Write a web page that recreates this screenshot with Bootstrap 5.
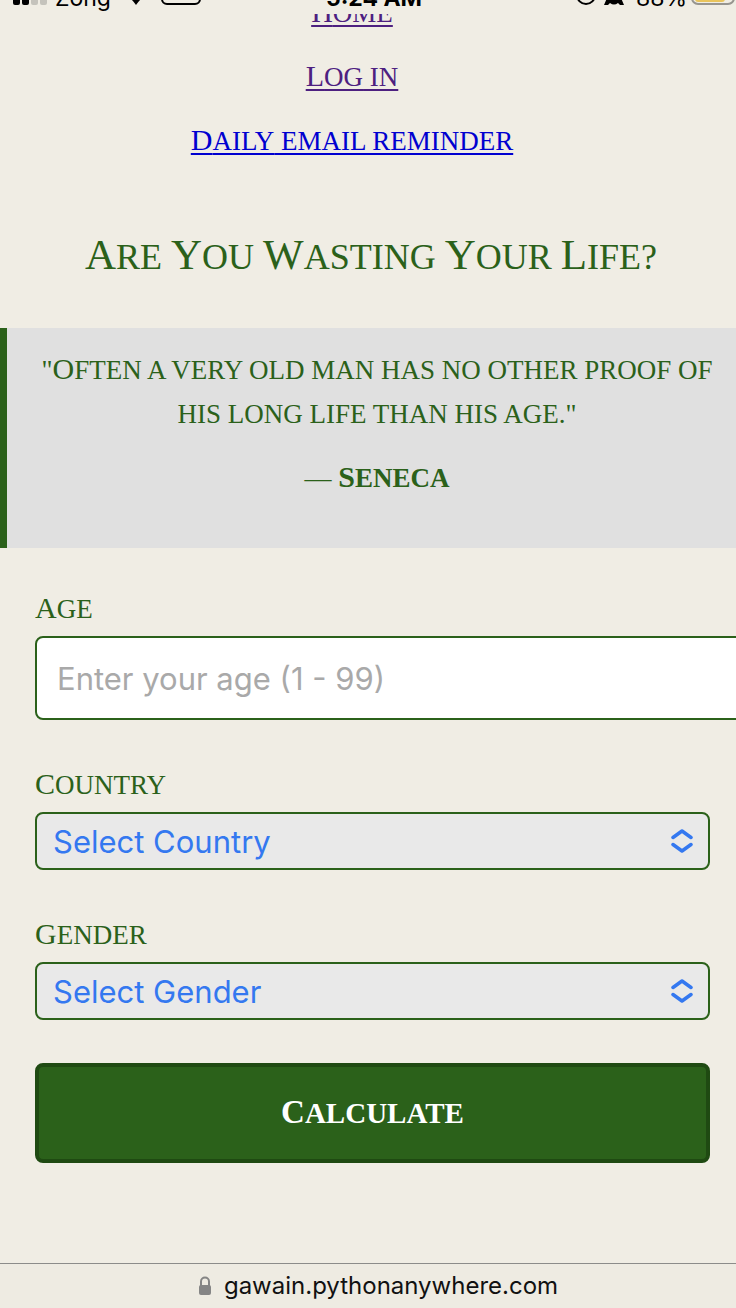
<!DOCTYPE html>
<html lang="en">
<head>
<meta charset="utf-8">
<meta name="viewport" content="width=device-width, initial-scale=1">
<title>Are You Wasting Your Life?</title>
<link rel="stylesheet" href="https://cdn.jsdelivr.net/npm/bootstrap@5.3.0/dist/css/bootstrap.min.css">
<style>
  :root { --leaf: #2b611a; --leaf-dark: #1f4a12; --paper: #f0ede4; }
  body { background: var(--paper); color: var(--leaf); font: 27px/44px "Liberation Serif", serif; }
  .screen { overflow: hidden; }
  /* Inscription capitals: every word in capitals, a lead word starts larger */
  .caps { text-transform: uppercase; }
  .lead-cap { display: inline-block; line-height: 30px; }
  .lead-cap::first-letter { font-size: 30px; line-height: 30px; }
  .status { height: 14px; background: var(--paper); color: #000; font: 23px/24px Inter, sans-serif; z-index: 2; }
  .status > div { height: 14px; padding: 0 0 9px 13px; }
  .status > div:last-child { padding-right: 1px; }
  .status-text { margin-bottom: -5px; }
  .site-nav { margin-top: -23px; padding-right: 32px; gap: 20px; }
  .site-nav a { height: 44px; color: #0000d0; text-underline-offset: 3px; text-decoration-thickness: 2px; }
  .site-nav a.seen { color: #4d2080; }
  .site-nav .lead-cap { text-decoration: underline 2px; }
  h1 { font-size: 36px; line-height: 60px; margin: 64px 0 41px; padding-left: 6px; }
  h1 .lead-cap::first-letter { font-size: 43px; }
  .quote { background: #e0e0e0; border-left: 7px solid var(--leaf); padding: 20px 18px 48px 29px; }
  .quote p { margin-bottom: 20px; }
  .life-form { padding: 39px 26px 99px 35px; }
  .field { margin-bottom: 43px; }
  .field label { margin-bottom: 5px; height: 44px; }
  .field .form-control, .field .form-select { border: 2px solid var(--leaf); border-radius: 8px; font: 31px/40px Inter, sans-serif; }
  .field .form-control { width: calc(100% + 60px); padding: 21px 20px 19px; background: #fff; }
  .field .form-control::placeholder { color: #a9a9a9; opacity: 1; }
  .field .form-select { padding: 8px 56px 6px 16px; color: #3478f0; background-color: #e9e9e9;
    background-image: url("data:image/svg+xml,%3Csvg xmlns='http://www.w3.org/2000/svg' viewBox='0 0 22 26' fill='none' stroke='%233478f0' stroke-width='3.500' stroke-linecap='round' stroke-linejoin='round'%3E%3Cpath d='M2 9.500 11 3l9 6.500M2 16.500 11 23l9-6.500'/%3E%3C/svg%3E");
    background-size: 22px 26px; background-position: right 15px center; }
  .btn-calc { height: 100px; background: var(--leaf); border: 4px solid var(--leaf-dark); border-radius: 8px; color: #fff; font: bold 29px/44px "Liberation Serif", serif; }
  .btn-calc:hover { background: var(--leaf-dark); color: #fff; }
  .btn-calc .lead-cap::first-letter { font-size: 33px; }
  .address { border-top: 1px solid #8c8c8a; background: #eeebe2; padding-left: 20px; gap: 12px; height: 45px; font: 24px/44px Inter, sans-serif; }
  .address a { color: #111; }
</style>
</head>
<body>
<div class="screen d-flex flex-column min-vh-100">
  <header class="status d-flex overflow-hidden position-relative">
    <div class="col d-flex align-items-end">
      <svg width="34" height="20" class="flex-shrink-0 me-2" aria-hidden="true"><rect y="12" width="7" height="8" rx="2"/><rect x="9" y="8" width="7" height="12" rx="2"/><g fill="#c5c3bc"><rect x="18" y="4" width="7" height="16" rx="2"/><rect x="27" width="7" height="20" rx="2"/></g></svg>
      <span class="status-text">Zong</span>
      <svg width="18" height="20" class="flex-shrink-0 ms-3" aria-hidden="true"><path d="M2 0h14v13q-2 0-7 7-5-7-7-7z"/></svg>
      <svg width="40" height="20" class="flex-shrink-0 ms-3" aria-hidden="true"><rect x="1" y="1" width="38" height="18" rx="5" fill="none" stroke="#000" stroke-width="2"/></svg>
    </div>
    <div class="col-auto d-flex align-items-end fw-bold"><span class="status-text">5:24 AM</span></div>
    <div class="col d-flex align-items-end justify-content-end">
      <svg width="20" height="20" class="flex-shrink-0" aria-hidden="true"><circle cx="10" cy="10" r="9" fill="none" stroke="#000" stroke-width="2"/></svg>
      <svg width="20" height="20" class="flex-shrink-0 ms-2 me-2" aria-hidden="true"><path d="M3 0h14v13l3 7h-4l-2-2q-4 3-8 0l-2 2H0l3-7z"/></svg>
      <span class="status-text ms-1">88%</span>
      <svg width="44" height="20" class="flex-shrink-0 ms-1" aria-hidden="true"><rect x="1" y="-1" width="42" height="20" rx="6" fill="none" stroke="#97958f" stroke-width="2"/><rect x="4" y="0" width="30" height="17" rx="3" fill="#e9c45c"/></svg>
    </div>
  </header>

  <nav class="site-nav caps d-flex flex-column align-items-center">
    <a class="seen" href="#home"><span class="lead-cap">Home</span></a>
    <a class="seen" href="#login"><span class="lead-cap">Log</span> in</a>
    <a href="#reminder"><span class="lead-cap">Daily</span> email reminder</a>
  </nav>

  <main class="flex-grow-1">
    <h1 class="caps text-center fw-normal"><span class="lead-cap">Are</span> <span class="lead-cap">You</span> <span class="lead-cap">Wasting</span> <span class="lead-cap">Your</span> <span class="lead-cap">Life?</span></h1>

    <section class="quote caps text-center">
      <p>"<span class="lead-cap">Often</span> a very old man has no other proof of his long life than his age."</p>
      <div>— <strong class="lead-cap">Seneca</strong></div>
    </section>

    <form class="life-form">
      <div class="field">
        <label class="caps d-block" for="age"><span class="lead-cap">Age</span></label>
        <input class="form-control" id="age" type="text" inputmode="numeric" placeholder="Enter your age (1 - 99)">
      </div>
      <div class="field">
        <label class="caps d-block" for="country"><span class="lead-cap">Country</span></label>
        <select class="form-select" id="country"><option>Select Country</option></select>
      </div>
      <div class="field">
        <label class="caps d-block" for="gender"><span class="lead-cap">Gender</span></label>
        <select class="form-select" id="gender"><option>Select Gender</option></select>
      </div>
      <button class="btn btn-calc caps w-100" type="button"><span class="lead-cap">Calculate</span></button>
    </form>
  </main>

  <footer class="address d-flex align-items-center justify-content-center">
    <svg width="14" height="20" viewBox="0 0 14 20" aria-hidden="true"><path d="M3 10V5.500a4 4 0 0 1 8 0V10" fill="none" stroke="#858585" stroke-width="2"/><rect x="1" y="9" width="12" height="10" rx="2" fill="#858585"/></svg>
    <a class="text-decoration-none" href="#site">gawain.pythonanywhere.com</a>
  </footer>
</div>
<script src="https://cdn.jsdelivr.net/npm/bootstrap@5.3.0/dist/js/bootstrap.bundle.min.js"></script>
</body>
</html>
